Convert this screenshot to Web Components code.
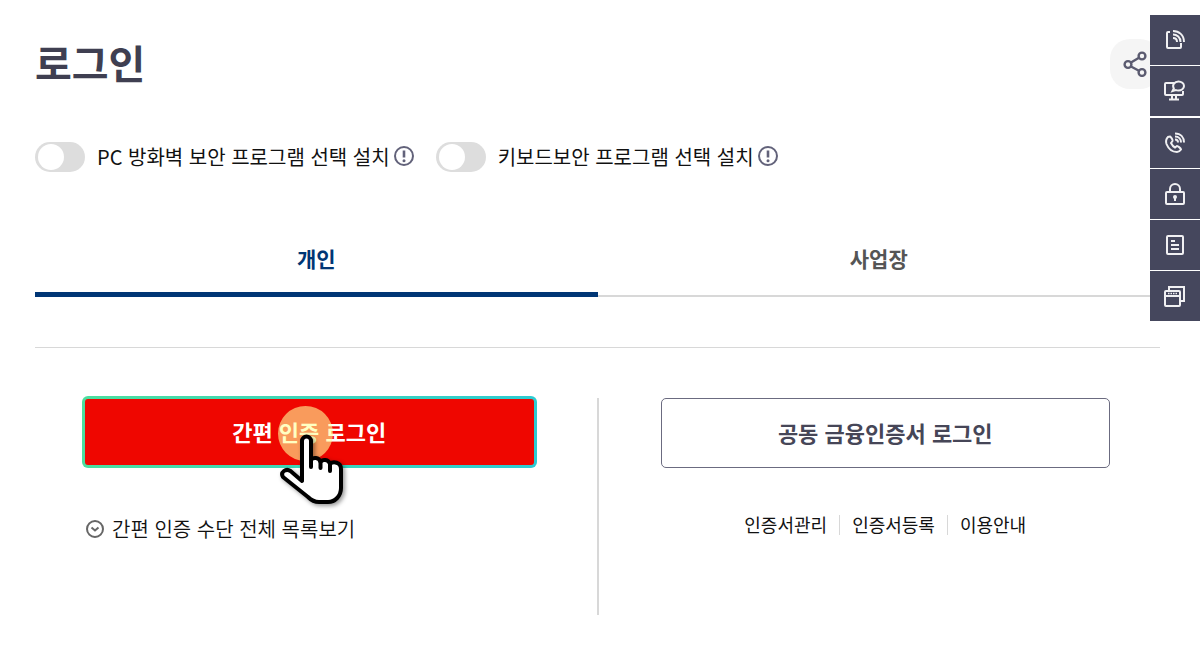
<!DOCTYPE html>
<html lang="ko">
<head>
<meta charset="utf-8">
<meta name="viewport" content="width=device-width, initial-scale=1">
<title>로그인</title>
<style>
body { margin: 0; background: #fff; color: #111; font-family: "Noto Sans CJK KR", "Noto Sans", sans-serif; }
</style>
</head>
<body>
<login-page></login-page>
<script>
const define = (name, html, setup) => {
  const template = document.createElement('template');
  template.innerHTML = '<style>*{box-sizing:border-box}button,a{font:inherit;color:inherit}svg{display:block}</style>' + html;
  customElements.define(name, class extends HTMLElement {
    connectedCallback() {
      if (this.shadowRoot) return;
      this.attachShadow({ mode: 'open' }).append(template.content.cloneNode(true));
      if (setup) setup(this, this.shadowRoot);
    }
  });
};

define('page-header', `
<style>
:host { display: flex; align-items: center; justify-content: space-between; height: 60px; }
h1 { margin: 0; padding-bottom: 4px; font-size: 40px; line-height: 56px; font-weight: 700; color: #3f3f51; }
button { width: 50px; height: 50px; padding: 0 0 0 12px; border: 0; border-radius: 20px; background: #f5f5f5; }
</style>
<h1><slot></slot></h1>
<button type="button" aria-label="공유하기">
<svg width="26" height="26" viewBox="0 0 26 26" fill="none" stroke="#5b5b70" stroke-width="2.4"><path d="M9 11.5 17.400 6.500M9 15.500l8.400 4.500"/><circle cx="6" cy="13.500" r="3.400"/><circle cx="20" cy="5" r="3.400"/><circle cx="20" cy="21.500" r="3.400"/></svg>
</button>`);

define('security-toggle', `
<style>
:host { display: flex; align-items: center; }
input { appearance: none; width: 50px; height: 30px; margin: 0 12px 0 0; padding: 2px 3px; border-radius: 15px; background: #ddd; }
input::before { content: ""; display: block; width: 26px; height: 26px; border-radius: 50%; background: #fff; }
input:checked { background: #003675; }
input:checked::before { margin-left: 18px; }
label { font-size: 20px; line-height: 30px; white-space: nowrap; }
button { margin-left: 4px; padding: 0 0 2px; border: 0; background: none; }
</style>
<input type="checkbox" id="toggle"><label for="toggle"><slot></slot></label>
<button type="button" aria-label="도움말"><svg width="20" height="20" viewBox="0 0 20 20"><circle cx="10" cy="10" r="9" fill="none" stroke="#62627a" stroke-width="2"/><path d="M10 4.5v7" stroke="#62627a" stroke-width="2.6"/><circle cx="10" cy="14.7" r="1.5" fill="#62627a"/></svg></button>`);

define('login-tabs', `
<style>
:host { display: grid; grid-template-columns: 1fr 1fr; }
button { height: 76px; padding: 0 0 1px; border: 0; border-bottom: 2px solid #d8d8d8; background: none; font-size: 21px; line-height: 30px; font-weight: 700; color: #555; }
button[aria-selected=true] { padding: 2px 0 0; border-bottom: 5px solid #003675; color: #003675; }
</style>
<button type="button" role="tab" aria-selected="true">개인</button>
<button type="button" role="tab" aria-selected="false">사업장</button>`,
(host, root) => {
  host.setAttribute('role', 'tablist');
  const tabs = root.querySelectorAll('button');
  tabs.forEach(tab => tab.addEventListener('click', () =>
    tabs.forEach(t => t.setAttribute('aria-selected', t === tab))));
});

define('login-button', `
<style>
:host { display: block; position: relative; }
button { display: block; width: 100%; height: 70px; padding: 0 0 2px; border: 1px solid #6b6b80; border-radius: 5px; background: #fff; font-size: 22px; line-height: 32px; font-weight: 700; color: #464657; }
:host([primary]) button { height: 72px; border: 3px solid transparent; border-radius: 6px; color: #fff; background: linear-gradient(#ef0600, #ef0600) padding-box, linear-gradient(100deg, #4bdf9e, #2ccbd3) border-box; }
</style>
<button type="button"><slot></slot></button><slot name="pointer"></slot>`);

define('click-pointer', `
<style>
:host { display: block; position: absolute; top: 4px; left: calc(50% - 34px); pointer-events: none; }
g { filter: drop-shadow(2px 2px 2px #0006); }
</style>
<svg width="76" height="110" viewBox="0 0 76 110" aria-hidden="true">
<circle cx="30.5" cy="33.5" r="27.5" fill="#ffff99" fill-opacity=".6"/>
<g stroke="#000" stroke-width="4" stroke-linejoin="round">
<path d="M27 81V41a4.500 4.500 0 0 1 9 0V60c2-3 8-3 9.500 2 2-3 8-3 9.500 2 3-3 11-2 11 5v19c0 8-6 14-13 14H44c-5 0-8-2-11-5L8 77c-3-5 3-9 7.500-6Z" fill="#fff"/>
<path d="M36 59v8M45.500 61v7M55 63v8" fill="none" stroke-linecap="round"/>
</g>
</svg>`);

define('method-link', `
<style>
:host { display: block; }
a { display: inline-flex; align-items: center; gap: 8px; font-size: 20px; line-height: 30px; font-weight: 350; text-decoration: none; }
</style>
<a href="#methods"><svg width="18" height="18" viewBox="0 0 18 18" fill="none" stroke="#666" stroke-width="2"><circle cx="9" cy="9" r="8"/><path d="m5.5 7.5 3.5 3 3.5-3"/></svg><slot></slot></a>`);

define('certificate-links', `
<style>
:host { display: flex; justify-content: center; align-items: center; }
a { padding: 0 12px 2px; font-size: 18px; line-height: 28px; text-decoration: none; }
i { width: 1px; height: 20px; background: #d8d8d8; }
</style>
<a href="#manage">인증서관리</a><i></i><a href="#register">인증서등록</a><i></i><a href="#guide">이용안내</a>`);

define('quick-menu', `
<style>
:host { position: fixed; top: 15px; right: 0; display: grid; gap: 2px; background: #fff; }
div { display: grid; gap: 1px; }
a { display: grid; place-items: center; width: 50px; height: 50px; background: #45475d; }
svg { width: 24px; height: 24px; fill: none; stroke: #f0f0f2; stroke-width: 2; }
</style>
<div>
<a href="#mobile" aria-label="모바일"><svg viewBox="0 0 24 24"><path d="M7 4H5q-1 0-1 1v14q0 1 1 1h12q1 0 1-1v-4"/><path d="M10 3c6 0 11 4 11 11M10 6.500c4 0 7.500 3 7.500 7.500M10 10c2.500 0 4 1.500 4 4"/></svg></a>
<a href="#remote" aria-label="원격지원"><svg viewBox="0 0 24 24" stroke-width="2.300"><path d="M11 4H3q-1 0-1 1v10q0 1 1 1h16q1 0 1-1v-3M9 16v4m4-4v4M6 20.500h10"/><path d="M15.500 2.500c3 0 5.500 2 5.500 4.500s-2.500 4.500-5.500 4.500c-1 0-2 0-2.700-.500L9.500 12l1.300-2.500C8.800 6 11.500 2.500 15.500 2.500Z"/></svg></a>
</div>
<div>
<a href="#call" aria-label="전화상담"><svg viewBox="0 0 24 24"><path d="M5 6C3 8 2.500 10 3.500 13c2 5 6 8 10.500 8 2 0 3-1 4-2.500 0-1-3-3.500-4-3.500l-2 1.500c-2-1-3-2.500-4-4.500L9.500 10C10 9 8 6 7 5.500Z"/><path d="M12 2.500c6 0 9 4 9 9M12 5.500c4 0 6 3 6 6M12 8.500c2 0 3 1 3 3"/></svg></a>
<a href="#security" aria-label="보안"><svg viewBox="0 0 24 24"><rect x="3" y="10" width="18" height="12" rx="1"/><path d="M7 10V7a5 5 0 0 1 10 0v3"/><circle cx="12" cy="15" r="2" fill="#f0f0f2" stroke="none"/><path d="M12 15v4"/></svg></a>
<a href="#forms" aria-label="서식"><svg viewBox="0 0 24 24"><rect x="4" y="3" width="16" height="18" rx="1"/><path d="M8 8h4M8 12h8M8 16h8"/></svg></a>
<a href="#sites" aria-label="관련 사이트"><svg viewBox="0 0 24 24"><rect x="2" y="7" width="15" height="15" rx="1"/><path d="M6 6V3h15v14h-3M3 12h14"/><path d="M5 9.500h10" stroke-dasharray="1.500 1" stroke-width="1.500"/></svg></a>
</div>`);

define('login-page', `
<style>
:host { display: block; }
main { padding: 34px 40px 32px 35px; }
.toggles { display: flex; flex-wrap: wrap; gap: 22px; margin: 48px 0 49px; }
.panel { display: grid; grid-template-columns: 1fr 2px 1fr; margin-top: 50px; padding-top: 48px; border-top: 1px solid #d8d8d8; }
.simple { padding: 0 60px 0 47px; }
.shared { padding: 2px 50px 0 62px; }
.divider { height: 217px; margin-top: 2px; background: #d8d8d8; }
method-link { margin: 46px 0 0 4px; }
certificate-links { margin-top: 42px; }
</style>
<main>
<page-header>로그인</page-header>
<div class="toggles"><security-toggle>PC 방화벽 보안 프로그램 선택 설치</security-toggle><security-toggle>키보드보안 프로그램 선택 설치</security-toggle></div>
<login-tabs></login-tabs>
<section class="panel">
<div class="simple"><login-button primary>간편 인증 로그인<click-pointer slot="pointer"></click-pointer></login-button><method-link>간편 인증 수단 전체 목록보기</method-link></div>
<div class="divider"></div>
<div class="shared"><login-button>공동 금융인증서 로그인</login-button><certificate-links></certificate-links></div>
</section>
</main>
<quick-menu></quick-menu>`);
</script>
</body>
</html>
